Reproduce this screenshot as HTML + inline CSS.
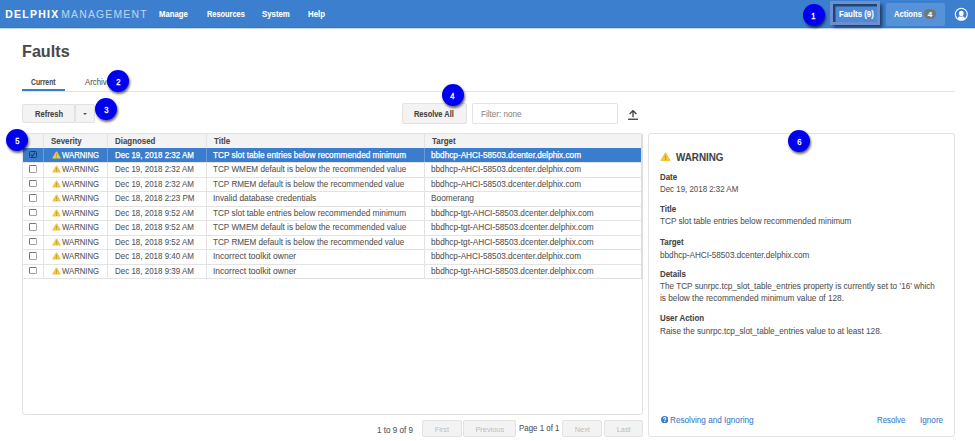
<!DOCTYPE html>
<html><head><meta charset="utf-8">
<style>
*{box-sizing:border-box;margin:0;padding:0}
html,body{width:975px;height:441px;overflow:hidden;background:#fff}
body{position:relative;font-family:"Liberation Sans",sans-serif;font-size:8px;color:#555}
.a{position:absolute;white-space:nowrap}
.t{line-height:1;transform-origin:0 0;-webkit-text-stroke:0.08px currentColor}
.btn{background:#f3f3f3;border:1px solid #e2e2e2;border-radius:2px}
.pg{background:#f3f3f3;border:1px solid #e3e3e3;border-radius:2px;color:#bdbdbd;font-size:8.1px;text-align:center}
.ts{display:inline-block;transform:scaleX(.91)}
.badge{width:22.2px;height:22.2px;border-radius:50%;background:#0000f0;color:#fff;font-size:8.8px;font-weight:normal;-webkit-text-stroke:0.35px #fff;line-height:24.3px;text-align:center;box-shadow:1px 2px 2.5px rgba(0,0,0,.6)}
</style></head><body>
<div class="a" style="left:0;top:0;width:975px;height:28px;background:#3d7fcf"></div>
<div class="a" style="left:0;top:27px;width:975px;height:1px;background:#3779cc"></div>
<div class="a" style="left:0;top:28px;width:975px;height:1px;background:rgba(61,127,207,.3)"></div>
<div class="a t" style="left:5.17px;top:9.55px;font-size:10.4px;font-weight:bold;color:#fff;transform:scaleX(1);letter-spacing:1.33px">DELPHIX</div>
<div class="a t" style="left:61.27px;top:9.55px;font-size:10.4px;font-weight:normal;color:#bcd3ef;transform:scaleX(1);letter-spacing:1.2px">MANAGEMENT</div>
<div class="a t" style="left:159.46px;top:10.22px;font-size:8.7px;font-weight:bold;color:#fff;transform:scaleX(0.89);">Manage</div>
<div class="a t" style="left:206.68px;top:10.22px;font-size:8.7px;font-weight:bold;color:#fff;transform:scaleX(0.85);">Resources</div>
<div class="a t" style="left:262.45px;top:10.22px;font-size:8.7px;font-weight:bold;color:#fff;transform:scaleX(0.9);">System</div>
<div class="a t" style="left:307.75px;top:10.22px;font-size:8.7px;font-weight:bold;color:#fff;transform:scaleX(0.9);">Help</div>
<div class="a" style="left:830px;top:1.2px;width:50px;height:23.5px;background:#4f8ad6;border:3px solid #6e8fcf;box-shadow:inset 2.5px 2.5px 0.5px #22446f,2.5px 2.5px 3px rgba(0,0,0,.5)"></div>
<div class="a t" style="left:839.15px;top:9.82px;font-size:8.7px;font-weight:bold;color:#fff;transform:scaleX(0.9);">Faults (9)</div>
<div class="a" style="left:886px;top:2.7px;width:59px;height:23.3px;background:#5592d8;border-radius:2px"></div>
<div class="a t" style="left:894.27px;top:10.42px;font-size:8.7px;font-weight:bold;color:#fff;transform:scaleX(0.875);">Actions</div>
<div class="a" style="left:924.2px;top:9.2px;width:12px;height:10px;border-radius:5px;background:#767676"></div>
<div class="a t" style="left:927.74px;top:10.93px;font-size:8px;font-weight:bold;color:#fff;transform:scaleX(1);">4</div>
<svg class="a" style="left:954px;top:7.05px" width="15" height="15" viewBox="0 0 15 15">
<circle cx="7.3" cy="7.3" r="6.0" fill="none" stroke="#fff" stroke-width="1.1"/>
<ellipse cx="7.3" cy="6.5" rx="2.3" ry="2.7" fill="#fff"/>
<path d="M3.3 11.4 Q4.1 9.5 6.1 9.2 L7.3 10.1 L8.5 9.2 Q10.5 9.5 11.3 11.4 Q9.6 13.3 7.3 13.3 Q5 13.3 3.3 11.4Z" fill="#fff"/>
</svg>
<div class="a t" style="left:21.77px;top:43.04px;font-size:17.4px;font-weight:bold;color:#4a4a4a;transform:scaleX(0.93);">Faults</div>
<div class="a t" style="left:31.02px;top:78.50px;font-size:8.2px;font-weight:bold;color:#4a4a4a;transform:scaleX(0.83);">Current</div>
<div class="a t" style="left:85.45px;top:78.50px;font-size:8.2px;font-weight:normal;color:#555;transform:scaleX(0.95);">Archive</div>
<div class="a" style="left:22px;top:91px;width:933px;height:1px;background:#e4e4e4"></div>
<div class="a" style="left:22px;top:88.9px;width:43.2px;height:2.5px;background:#3b7dcd"></div>
<div class="a btn" style="left:22.3px;top:103.7px;width:52.7px;height:19.3px;border-radius:2px 0 0 2px"></div>
<div class="a btn" style="left:74.5px;top:103.7px;width:20.3px;height:19.3px;border-radius:0 2px 2px 0"></div>
<div class="a" style="left:83.1px;top:113.0px;width:0;height:0;border-left:2.8px solid transparent;border-right:2.8px solid transparent;border-top:2.8px solid #555"></div>
<div class="a t" style="left:34.87px;top:109.52px;font-size:8.7px;font-weight:bold;color:#444;transform:scaleX(0.867);">Refresh</div>
<div class="a btn" style="left:401.7px;top:103.4px;width:65.1px;height:20.2px"></div>
<div class="a t" style="left:414.08px;top:110.02px;font-size:8.7px;font-weight:bold;color:#444;transform:scaleX(0.855);">Resolve All</div>
<div class="a" style="left:472.4px;top:103.3px;width:145.8px;height:20.5px;border:1px solid #e3e3e3;border-radius:2px"></div>
<div class="a t" style="left:480.63px;top:109.82px;font-size:8.7px;font-weight:normal;color:#8a8a8a;transform:scaleX(0.935);">Filter: none</div>
<svg class="a" style="left:627px;top:109px" width="12" height="12" viewBox="0 0 12 12">
<path d="M6 1.6 L6 8.2 M2.6 5 L6 1.6 L9.4 5" fill="none" stroke="#3d3d3d" stroke-width="1.3"/>
<rect x="1" y="9.6" width="10" height="1.3" fill="#3d3d3d"/>
</svg>
<div class="a" style="left:22px;top:133px;width:621px;height:282px;border:1px solid #e3e3e3;border-radius:3px"></div>
<div class="a" style="left:23px;top:134px;width:618px;height:14px;background:#f3f3f3"></div>
<div class="a" style="left:23px;top:147.5px;width:618px;height:14.3px;background:#3b7dcd"></div>
<div class="a" style="left:23px;top:162.0px;width:618px;height:1px;background:#e3e3e3"></div>
<div class="a" style="left:23px;top:176.5px;width:618px;height:1px;background:#e3e3e3"></div>
<div class="a" style="left:23px;top:191.0px;width:618px;height:1px;background:#e3e3e3"></div>
<div class="a" style="left:23px;top:205.5px;width:618px;height:1px;background:#e3e3e3"></div>
<div class="a" style="left:23px;top:220.0px;width:618px;height:1px;background:#e3e3e3"></div>
<div class="a" style="left:23px;top:234.5px;width:618px;height:1px;background:#e3e3e3"></div>
<div class="a" style="left:23px;top:249.0px;width:618px;height:1px;background:#e3e3e3"></div>
<div class="a" style="left:23px;top:263.5px;width:618px;height:1px;background:#e3e3e3"></div>
<div class="a" style="left:23px;top:278.0px;width:618px;height:1px;background:#e3e3e3"></div>
<div class="a" style="left:43px;top:134px;width:1px;height:144.5px;background:#e3e3e3"></div>
<div class="a" style="left:43px;top:148px;width:1px;height:14px;background:#6b9bd6"></div>
<div class="a" style="left:107px;top:134px;width:1px;height:144.5px;background:#e3e3e3"></div>
<div class="a" style="left:107px;top:148px;width:1px;height:14px;background:#6b9bd6"></div>
<div class="a" style="left:206px;top:134px;width:1px;height:144.5px;background:#e3e3e3"></div>
<div class="a" style="left:206px;top:148px;width:1px;height:14px;background:#6b9bd6"></div>
<div class="a" style="left:424px;top:134px;width:1px;height:144.5px;background:#e3e3e3"></div>
<div class="a" style="left:424px;top:148px;width:1px;height:14px;background:#6b9bd6"></div>
<div class="a" style="left:641px;top:134px;width:1.5px;height:144.5px;background:#dedede"></div>
<div class="a t" style="left:50.95px;top:137.42px;font-size:8.7px;font-weight:bold;color:#4a4a4a;transform:scaleX(0.91);">Severity</div>
<div class="a t" style="left:114.95px;top:137.42px;font-size:8.7px;font-weight:bold;color:#4a4a4a;transform:scaleX(0.91);">Diagnosed</div>
<div class="a t" style="left:213.95px;top:137.42px;font-size:8.7px;font-weight:bold;color:#4a4a4a;transform:scaleX(0.91);">Title</div>
<div class="a t" style="left:431.95px;top:137.42px;font-size:8.7px;font-weight:bold;color:#4a4a4a;transform:scaleX(0.91);">Target</div>
<div class="a" style="left:29.1px;top:150.8px;width:7.7px;height:7.6px;border:1.1px solid #1d3b68;border-radius:1.5px"></div>
<svg class="a" style="left:29.1px;top:150.8px" width="8" height="8" viewBox="0 0 8 8"><path d="M1.9 3.7 L3.3 5.1 L6 1.6" fill="none" stroke="#1d3b68" stroke-width="1.1"/></svg>
<svg class="a" style="left:51.9px;top:150.8px" width="9" height="8" viewBox="0 0 9 8"><path d="M4.5 0.4 Q4.9 0.4 5.1 0.8 L8.7 7 Q8.9 7.6 8.3 7.6 L0.7 7.6 Q0.1 7.6 0.3 7 L3.9 0.8 Q4.1 0.4 4.5 0.4Z" fill="#f2c53d"/><rect x="4.05" y="2.6" width="0.9" height="2.9" fill="#8a7a50" opacity=".55"/><rect x="4.05" y="6" width="0.9" height="0.9" fill="#8a7a50" opacity=".55"/></svg>
<div class="a t" style="left:61.76px;top:150.52px;font-size:8.7px;font-weight:normal;color:#fff;transform:scaleX(0.89);-webkit-text-stroke:0.25px #fff">WARNING</div>
<div class="a t" style="left:114.74px;top:150.52px;font-size:8.7px;font-weight:normal;color:#fff;transform:scaleX(0.918);-webkit-text-stroke:0.25px #fff">Dec 19, 2018 2:32 AM</div>
<div class="a t" style="left:213.32px;top:150.52px;font-size:8.7px;font-weight:normal;color:#fff;transform:scaleX(0.948);-webkit-text-stroke:0.25px #fff">TCP slot table entries below recommended minimum</div>
<div class="a t" style="left:430.63px;top:150.52px;font-size:8.7px;font-weight:normal;color:#fff;transform:scaleX(0.944);-webkit-text-stroke:0.25px #fff">bbdhcp-AHCI-58503.dcenter.delphix.com</div>
<div class="a" style="left:29.1px;top:165.3px;width:7.7px;height:7.6px;border:1px solid #747474;border-right-color:#a8a8a8;border-bottom-color:#a0a0a0;border-radius:1.5px;background:#fff"></div>
<svg class="a" style="left:51.9px;top:165.3px" width="9" height="8" viewBox="0 0 9 8"><path d="M4.5 0.4 Q4.9 0.4 5.1 0.8 L8.7 7 Q8.9 7.6 8.3 7.6 L0.7 7.6 Q0.1 7.6 0.3 7 L3.9 0.8 Q4.1 0.4 4.5 0.4Z" fill="#f2c53d"/><rect x="4.05" y="2.6" width="0.9" height="2.9" fill="#8a7a50" opacity=".55"/><rect x="4.05" y="6" width="0.9" height="0.9" fill="#8a7a50" opacity=".55"/></svg>
<div class="a t" style="left:61.76px;top:165.02px;font-size:8.7px;font-weight:normal;color:#555;transform:scaleX(0.89);">WARNING</div>
<div class="a t" style="left:114.74px;top:165.02px;font-size:8.7px;font-weight:normal;color:#555;transform:scaleX(0.918);">Dec 19, 2018 2:32 AM</div>
<div class="a t" style="left:213.33px;top:165.02px;font-size:8.7px;font-weight:normal;color:#555;transform:scaleX(0.938);">TCP WMEM default is below the recommended value</div>
<div class="a t" style="left:430.63px;top:165.02px;font-size:8.7px;font-weight:normal;color:#555;transform:scaleX(0.944);">bbdhcp-AHCI-58503.dcenter.delphix.com</div>
<div class="a" style="left:29.1px;top:179.8px;width:7.7px;height:7.6px;border:1px solid #747474;border-right-color:#a8a8a8;border-bottom-color:#a0a0a0;border-radius:1.5px;background:#fff"></div>
<svg class="a" style="left:51.9px;top:179.8px" width="9" height="8" viewBox="0 0 9 8"><path d="M4.5 0.4 Q4.9 0.4 5.1 0.8 L8.7 7 Q8.9 7.6 8.3 7.6 L0.7 7.6 Q0.1 7.6 0.3 7 L3.9 0.8 Q4.1 0.4 4.5 0.4Z" fill="#f2c53d"/><rect x="4.05" y="2.6" width="0.9" height="2.9" fill="#8a7a50" opacity=".55"/><rect x="4.05" y="6" width="0.9" height="0.9" fill="#8a7a50" opacity=".55"/></svg>
<div class="a t" style="left:61.76px;top:179.52px;font-size:8.7px;font-weight:normal;color:#555;transform:scaleX(0.89);">WARNING</div>
<div class="a t" style="left:114.74px;top:179.52px;font-size:8.7px;font-weight:normal;color:#555;transform:scaleX(0.918);">Dec 19, 2018 2:32 AM</div>
<div class="a t" style="left:213.33px;top:179.52px;font-size:8.7px;font-weight:normal;color:#555;transform:scaleX(0.937);">TCP RMEM default is below the recommended value</div>
<div class="a t" style="left:430.63px;top:179.52px;font-size:8.7px;font-weight:normal;color:#555;transform:scaleX(0.944);">bbdhcp-AHCI-58503.dcenter.delphix.com</div>
<div class="a" style="left:29.1px;top:194.3px;width:7.7px;height:7.6px;border:1px solid #747474;border-right-color:#a8a8a8;border-bottom-color:#a0a0a0;border-radius:1.5px;background:#fff"></div>
<svg class="a" style="left:51.9px;top:194.3px" width="9" height="8" viewBox="0 0 9 8"><path d="M4.5 0.4 Q4.9 0.4 5.1 0.8 L8.7 7 Q8.9 7.6 8.3 7.6 L0.7 7.6 Q0.1 7.6 0.3 7 L3.9 0.8 Q4.1 0.4 4.5 0.4Z" fill="#f2c53d"/><rect x="4.05" y="2.6" width="0.9" height="2.9" fill="#8a7a50" opacity=".55"/><rect x="4.05" y="6" width="0.9" height="0.9" fill="#8a7a50" opacity=".55"/></svg>
<div class="a t" style="left:61.76px;top:194.02px;font-size:8.7px;font-weight:normal;color:#555;transform:scaleX(0.89);">WARNING</div>
<div class="a t" style="left:114.74px;top:194.02px;font-size:8.7px;font-weight:normal;color:#555;transform:scaleX(0.918);">Dec 18, 2018 2:23 PM</div>
<div class="a t" style="left:213.32px;top:194.02px;font-size:8.7px;font-weight:normal;color:#555;transform:scaleX(0.959);">Invalid database credentials</div>
<div class="a t" style="left:430.62px;top:194.02px;font-size:8.7px;font-weight:normal;color:#555;transform:scaleX(0.956);">Boomerang</div>
<div class="a" style="left:29.1px;top:208.8px;width:7.7px;height:7.6px;border:1px solid #747474;border-right-color:#a8a8a8;border-bottom-color:#a0a0a0;border-radius:1.5px;background:#fff"></div>
<svg class="a" style="left:51.9px;top:208.8px" width="9" height="8" viewBox="0 0 9 8"><path d="M4.5 0.4 Q4.9 0.4 5.1 0.8 L8.7 7 Q8.9 7.6 8.3 7.6 L0.7 7.6 Q0.1 7.6 0.3 7 L3.9 0.8 Q4.1 0.4 4.5 0.4Z" fill="#f2c53d"/><rect x="4.05" y="2.6" width="0.9" height="2.9" fill="#8a7a50" opacity=".55"/><rect x="4.05" y="6" width="0.9" height="0.9" fill="#8a7a50" opacity=".55"/></svg>
<div class="a t" style="left:61.76px;top:208.52px;font-size:8.7px;font-weight:normal;color:#555;transform:scaleX(0.89);">WARNING</div>
<div class="a t" style="left:114.74px;top:208.52px;font-size:8.7px;font-weight:normal;color:#555;transform:scaleX(0.918);">Dec 18, 2018 9:52 AM</div>
<div class="a t" style="left:213.32px;top:208.52px;font-size:8.7px;font-weight:normal;color:#555;transform:scaleX(0.948);">TCP slot table entries below recommended minimum</div>
<div class="a t" style="left:430.62px;top:208.52px;font-size:8.7px;font-weight:normal;color:#555;transform:scaleX(0.949);">bbdhcp-tgt-AHCI-58503.dcenter.delphix.com</div>
<div class="a" style="left:29.1px;top:223.3px;width:7.7px;height:7.6px;border:1px solid #747474;border-right-color:#a8a8a8;border-bottom-color:#a0a0a0;border-radius:1.5px;background:#fff"></div>
<svg class="a" style="left:51.9px;top:223.3px" width="9" height="8" viewBox="0 0 9 8"><path d="M4.5 0.4 Q4.9 0.4 5.1 0.8 L8.7 7 Q8.9 7.6 8.3 7.6 L0.7 7.6 Q0.1 7.6 0.3 7 L3.9 0.8 Q4.1 0.4 4.5 0.4Z" fill="#f2c53d"/><rect x="4.05" y="2.6" width="0.9" height="2.9" fill="#8a7a50" opacity=".55"/><rect x="4.05" y="6" width="0.9" height="0.9" fill="#8a7a50" opacity=".55"/></svg>
<div class="a t" style="left:61.76px;top:223.02px;font-size:8.7px;font-weight:normal;color:#555;transform:scaleX(0.89);">WARNING</div>
<div class="a t" style="left:114.74px;top:223.02px;font-size:8.7px;font-weight:normal;color:#555;transform:scaleX(0.918);">Dec 18, 2018 9:52 AM</div>
<div class="a t" style="left:213.33px;top:223.02px;font-size:8.7px;font-weight:normal;color:#555;transform:scaleX(0.938);">TCP WMEM default is below the recommended value</div>
<div class="a t" style="left:430.62px;top:223.02px;font-size:8.7px;font-weight:normal;color:#555;transform:scaleX(0.949);">bbdhcp-tgt-AHCI-58503.dcenter.delphix.com</div>
<div class="a" style="left:29.1px;top:237.8px;width:7.7px;height:7.6px;border:1px solid #747474;border-right-color:#a8a8a8;border-bottom-color:#a0a0a0;border-radius:1.5px;background:#fff"></div>
<svg class="a" style="left:51.9px;top:237.8px" width="9" height="8" viewBox="0 0 9 8"><path d="M4.5 0.4 Q4.9 0.4 5.1 0.8 L8.7 7 Q8.9 7.6 8.3 7.6 L0.7 7.6 Q0.1 7.6 0.3 7 L3.9 0.8 Q4.1 0.4 4.5 0.4Z" fill="#f2c53d"/><rect x="4.05" y="2.6" width="0.9" height="2.9" fill="#8a7a50" opacity=".55"/><rect x="4.05" y="6" width="0.9" height="0.9" fill="#8a7a50" opacity=".55"/></svg>
<div class="a t" style="left:61.76px;top:237.52px;font-size:8.7px;font-weight:normal;color:#555;transform:scaleX(0.89);">WARNING</div>
<div class="a t" style="left:114.74px;top:237.52px;font-size:8.7px;font-weight:normal;color:#555;transform:scaleX(0.918);">Dec 18, 2018 9:52 AM</div>
<div class="a t" style="left:213.33px;top:237.52px;font-size:8.7px;font-weight:normal;color:#555;transform:scaleX(0.937);">TCP RMEM default is below the recommended value</div>
<div class="a t" style="left:430.62px;top:237.52px;font-size:8.7px;font-weight:normal;color:#555;transform:scaleX(0.949);">bbdhcp-tgt-AHCI-58503.dcenter.delphix.com</div>
<div class="a" style="left:29.1px;top:252.3px;width:7.7px;height:7.6px;border:1px solid #747474;border-right-color:#a8a8a8;border-bottom-color:#a0a0a0;border-radius:1.5px;background:#fff"></div>
<svg class="a" style="left:51.9px;top:252.3px" width="9" height="8" viewBox="0 0 9 8"><path d="M4.5 0.4 Q4.9 0.4 5.1 0.8 L8.7 7 Q8.9 7.6 8.3 7.6 L0.7 7.6 Q0.1 7.6 0.3 7 L3.9 0.8 Q4.1 0.4 4.5 0.4Z" fill="#f2c53d"/><rect x="4.05" y="2.6" width="0.9" height="2.9" fill="#8a7a50" opacity=".55"/><rect x="4.05" y="6" width="0.9" height="0.9" fill="#8a7a50" opacity=".55"/></svg>
<div class="a t" style="left:61.76px;top:252.02px;font-size:8.7px;font-weight:normal;color:#555;transform:scaleX(0.89);">WARNING</div>
<div class="a t" style="left:114.74px;top:252.02px;font-size:8.7px;font-weight:normal;color:#555;transform:scaleX(0.918);">Dec 18, 2018 9:40 AM</div>
<div class="a t" style="left:213.30px;top:252.02px;font-size:8.7px;font-weight:normal;color:#555;transform:scaleX(0.979);">Incorrect toolkit owner</div>
<div class="a t" style="left:430.63px;top:252.02px;font-size:8.7px;font-weight:normal;color:#555;transform:scaleX(0.944);">bbdhcp-AHCI-58503.dcenter.delphix.com</div>
<div class="a" style="left:29.1px;top:266.8px;width:7.7px;height:7.6px;border:1px solid #747474;border-right-color:#a8a8a8;border-bottom-color:#a0a0a0;border-radius:1.5px;background:#fff"></div>
<svg class="a" style="left:51.9px;top:266.8px" width="9" height="8" viewBox="0 0 9 8"><path d="M4.5 0.4 Q4.9 0.4 5.1 0.8 L8.7 7 Q8.9 7.6 8.3 7.6 L0.7 7.6 Q0.1 7.6 0.3 7 L3.9 0.8 Q4.1 0.4 4.5 0.4Z" fill="#f2c53d"/><rect x="4.05" y="2.6" width="0.9" height="2.9" fill="#8a7a50" opacity=".55"/><rect x="4.05" y="6" width="0.9" height="0.9" fill="#8a7a50" opacity=".55"/></svg>
<div class="a t" style="left:61.76px;top:266.52px;font-size:8.7px;font-weight:normal;color:#555;transform:scaleX(0.89);">WARNING</div>
<div class="a t" style="left:114.74px;top:266.52px;font-size:8.7px;font-weight:normal;color:#555;transform:scaleX(0.918);">Dec 18, 2018 9:39 AM</div>
<div class="a t" style="left:213.30px;top:266.52px;font-size:8.7px;font-weight:normal;color:#555;transform:scaleX(0.979);">Incorrect toolkit owner</div>
<div class="a t" style="left:430.62px;top:266.52px;font-size:8.7px;font-weight:normal;color:#555;transform:scaleX(0.949);">bbdhcp-tgt-AHCI-58503.dcenter.delphix.com</div>
<div class="a" style="left:648px;top:133px;width:307px;height:304px;border:1px solid #e3e3e3;border-radius:3px"></div>
<svg class="a" style="left:659.8px;top:152.2px" width="11" height="9.4" viewBox="0 0 9 8"><path d="M4.5 0.4 Q4.9 0.4 5.1 0.8 L8.7 7 Q8.9 7.6 8.3 7.6 L0.7 7.6 Q0.1 7.6 0.3 7 L3.9 0.8 Q4.1 0.4 4.5 0.4Z" fill="#f2c53d"/><rect x="4.05" y="2.6" width="0.9" height="2.9" fill="#8a7a50" opacity=".55"/><rect x="4.05" y="6" width="0.9" height="0.9" fill="#8a7a50" opacity=".55"/></svg>
<div class="a t" style="left:676.31px;top:151.59px;font-size:10.8px;font-weight:bold;color:#444;transform:scaleX(0.91);">WARNING</div>
<div class="a t" style="left:660.45px;top:172.62px;font-size:8.7px;font-weight:bold;color:#444;transform:scaleX(0.91);">Date</div>
<div class="a t" style="left:660.05px;top:185.12px;font-size:8.7px;font-weight:normal;color:#555;transform:scaleX(0.91);">Dec 19, 2018 2:32 AM</div>
<div class="a t" style="left:660.45px;top:204.92px;font-size:8.7px;font-weight:bold;color:#444;transform:scaleX(0.91);">Title</div>
<div class="a t" style="left:660.03px;top:217.42px;font-size:8.7px;font-weight:normal;color:#555;transform:scaleX(0.94);">TCP slot table entries below recommended minimum</div>
<div class="a t" style="left:660.45px;top:238.12px;font-size:8.7px;font-weight:bold;color:#444;transform:scaleX(0.91);">Target</div>
<div class="a t" style="left:660.03px;top:250.52px;font-size:8.7px;font-weight:normal;color:#555;transform:scaleX(0.94);">bbdhcp-AHCI-58503.dcenter.delphix.com</div>
<div class="a t" style="left:660.45px;top:269.92px;font-size:8.7px;font-weight:bold;color:#444;transform:scaleX(0.91);">Details</div>
<div class="a t" style="left:660.03px;top:282.32px;font-size:8.7px;font-weight:normal;color:#555;transform:scaleX(0.94);">The TCP sunrpc.tcp_slot_table_entries property is currently set to ’16’ which</div>
<div class="a t" style="left:660.02px;top:294.32px;font-size:8.7px;font-weight:normal;color:#555;transform:scaleX(0.95);">is below the recommended minimum value of 128.</div>
<div class="a t" style="left:660.45px;top:313.82px;font-size:8.7px;font-weight:bold;color:#444;transform:scaleX(0.91);">User Action</div>
<div class="a t" style="left:660.02px;top:326.82px;font-size:8.7px;font-weight:normal;color:#555;transform:scaleX(0.946);">Raise the sunrpc.tcp_slot_table_entries value to at least 128.</div>
<svg class="a" style="left:660.8px;top:415.6px" width="7.3" height="7.3" viewBox="0 0 8 8"><circle cx="4" cy="4" r="4" fill="#3f7cc9"/><path d="M2.8 3 Q2.8 1.7 4 1.7 Q5.3 1.7 5.3 2.9 Q5.3 3.6 4.6 4 Q4.1 4.3 4.1 4.9" fill="none" stroke="#fff" stroke-width="1.1"/><rect x="3.5" y="5.5" width="1.15" height="1.1" fill="#fff"/></svg>
<div class="a t" style="left:670.13px;top:415.92px;font-size:8.7px;font-weight:normal;color:#3f7cc9;transform:scaleX(0.94);">Resolving and Ignoring</div>
<div class="a t" style="left:877.25px;top:415.62px;font-size:8.7px;font-weight:normal;color:#3f7cc9;transform:scaleX(0.9);">Resolve</div>
<div class="a t" style="left:919.93px;top:415.62px;font-size:8.7px;font-weight:normal;color:#3f7cc9;transform:scaleX(0.94);">Ignore</div>
<div class="a t" style="left:376.53px;top:425.62px;font-size:8.7px;font-weight:normal;color:#555;transform:scaleX(0.93);">1 to 9 of 9</div>
<div class="a t" style="left:519.25px;top:424.12px;font-size:8.7px;font-weight:normal;color:#555;transform:scaleX(0.91);">Page 1 of 1</div>
<div class="a pg" style="left:422.3px;top:420.3px;width:39.5px;height:16.4px;line-height:17px;"><span class="ts">First</span></div>
<div class="a pg" style="left:463.4px;top:420.3px;width:53.1px;height:16.4px;line-height:17px;"><span class="ts">Previous</span></div>
<div class="a pg" style="left:562.3px;top:420.3px;width:39.5px;height:16.4px;line-height:17px;"><span class="ts">Next</span></div>
<div class="a pg" style="left:604.3px;top:420.3px;width:38.3px;height:16.4px;line-height:17px;"><span class="ts">Last</span></div>
<div class="a badge" style="left:802.5px;top:3.5px"><span style="display:inline-block;transform:scaleX(.86)">1</span></div>
<div class="a badge" style="left:107px;top:69.8px"><span style="display:inline-block;transform:scaleX(.86)">2</span></div>
<div class="a badge" style="left:95px;top:97.7px"><span style="display:inline-block;transform:scaleX(.86)">3</span></div>
<div class="a badge" style="left:441.8px;top:83.6px"><span style="display:inline-block;transform:scaleX(.86)">4</span></div>
<div class="a badge" style="left:6px;top:128.6px"><span style="display:inline-block;transform:scaleX(.86)">5</span></div>
<div class="a badge" style="left:788px;top:130px"><span style="display:inline-block;transform:scaleX(.86)">6</span></div>
</body></html>
